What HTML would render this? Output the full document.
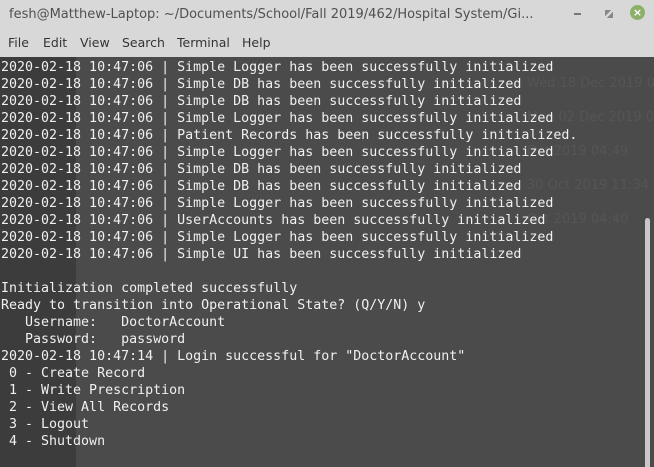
<!DOCTYPE html>
<html><head><style>
body{margin:0;width:654px;height:467px;overflow:hidden;background:#4b4b4b;font-family:"DejaVu Sans","Liberation Sans",sans-serif;position:relative}
#title{position:absolute;left:0;top:0;width:654px;height:29px;background:#d8d8d8;color:#505050;font-size:13px;line-height:29px}
#title span{position:absolute;left:9px;top:0}
#menu{position:absolute;left:0;top:29px;width:654px;height:28px;background:#d8d8d8;color:#333;font-size:12.5px;line-height:27px}
#menu span{position:absolute;top:0}
#band{position:absolute;left:0;top:57px;width:76px;height:410px;background:#3c3c3c}
#term{position:absolute;left:1px;top:59px;margin:0;font-family:"DejaVu Sans Mono","Liberation Mono",monospace;font-size:13.3px;line-height:17px;color:#f0f0f0;white-space:pre}
#sb{position:absolute;left:645px;top:218px;width:5px;height:249px;background:#c8c8c8;border-radius:3px 3px 0 0}
.ghost{position:absolute;color:#555;font-size:13px;white-space:nowrap}
</style></head><body>
<div id="title"><span>fesh@Matthew-Laptop: ~/Documents/School/Fall 2019/462/Hospital System/Gi...</span>
<div style="position:absolute;left:574px;top:13px;width:7px;height:2px;background:#777"></div>
<div style="position:absolute;left:605px;top:10px;width:8px;height:8px;background:linear-gradient(135deg,#888 40%,transparent 40%,transparent 60%,#888 60%)"></div>
<div style="position:absolute;left:630px;top:5px;width:15px;height:15px;border-radius:50%;background:#8cb068;color:#fff;font-size:11px;line-height:15px;text-align:center;font-weight:bold">×</div>
</div>
<div id="menu"><span style="left:8px">File</span><span style="left:43px">Edit</span><span style="left:80px">View</span><span style="left:122px">Search</span><span style="left:177px">Terminal</span><span style="left:242px">Help</span></div>
<div id="band"></div>
<div class="ghost" style="left:527px;top:76px">Wed 18 Dec 2019 03:42</div>
<div class="ghost" style="left:527px;top:110px">Mon 02 Dec 2019 03:47</div>
<div class="ghost" style="left:527px;top:144px">Oct 2019 04:49</div>
<div class="ghost" style="left:527px;top:178px">30 Oct 2019 11:34</div>
<div class="ghost" style="left:527px;top:212px">Oct 2019 04:40</div>
<pre id="term">2020-02-18 10:47:06 | Simple Logger has been successfully initialized
2020-02-18 10:47:06 | Simple DB has been successfully initialized
2020-02-18 10:47:06 | Simple DB has been successfully initialized
2020-02-18 10:47:06 | Simple Logger has been successfully initialized
2020-02-18 10:47:06 | Patient Records has been successfully initialized.
2020-02-18 10:47:06 | Simple Logger has been successfully initialized
2020-02-18 10:47:06 | Simple DB has been successfully initialized
2020-02-18 10:47:06 | Simple DB has been successfully initialized
2020-02-18 10:47:06 | Simple Logger has been successfully initialized
2020-02-18 10:47:06 | UserAccounts has been successfully initialized
2020-02-18 10:47:06 | Simple Logger has been successfully initialized
2020-02-18 10:47:06 | Simple UI has been successfully initialized

Initialization completed successfully
Ready to transition into Operational State? (Q/Y/N) y
   Username:   DoctorAccount
   Password:   password
2020-02-18 10:47:14 | Login successful for "DoctorAccount"
 0 - Create Record
 1 - Write Prescription
 2 - View All Records
 3 - Logout
 4 - Shutdown</pre>
<div id="sb"></div>
</body></html>
